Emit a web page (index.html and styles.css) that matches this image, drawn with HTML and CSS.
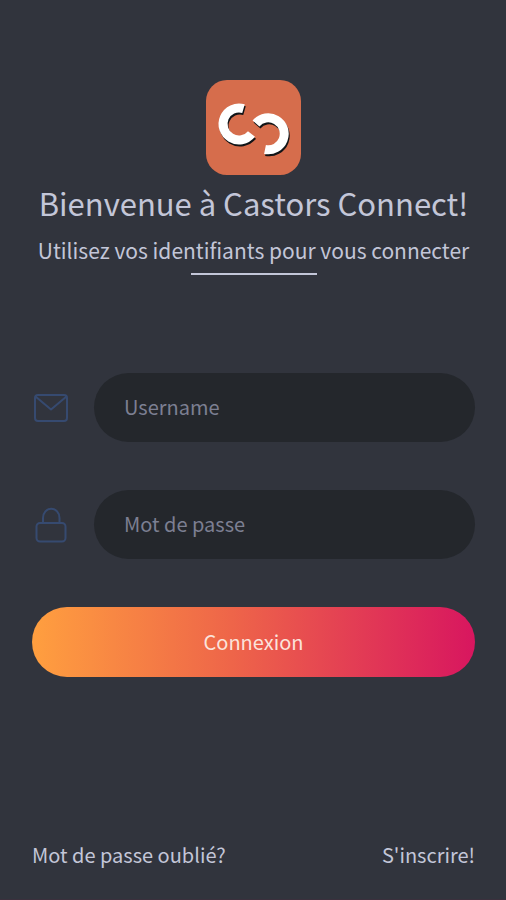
FILE: index.html
```html
<!DOCTYPE html>
<html lang="fr">
<head>
    <meta charset="UTF-8">
    <meta name="viewport" content="width=device-width, initial-scale=1.0">
    <title>Castors Connect</title>
    <link rel="stylesheet" href="styles.css">
</head>
<body>

<main class="container">
    <header class="header">
        <svg class="logo" viewBox="0 0 95 95" role="img" aria-label="Castors Connect">
            <rect width="95" height="95" rx="21" fill="#d66d4c"/>
            <g fill="none" stroke="#111417" stroke-width="9" transform="translate(1 2)">
                <path d="M37.500 28.600A16 16 0 1 0 45.500 54"/>
                <path d="M50 43.500A16 16 0 1 1 59 69.500"/>
            </g>
            <g fill="none" stroke="#fff" stroke-width="9">
                <path d="M37.500 28.600A16 16 0 1 0 45.500 54"/>
                <path d="M50 43.500A16 16 0 1 1 59 69.500"/>
            </g>
        </svg>
        <h1>Bienvenue à Castors Connect!</h1>
        <p class="subtitle">Utilisez vos identifiants pour vous connecter</p>
        <hr class="line">
    </header>

    <form class="login">
        <div class="field">
            <label for="username" aria-label="Username">
                <svg class="icon" viewBox="0 0 36 36">
                    <rect x="3" y="5" width="32" height="26" rx="3"/>
                    <path d="M3.500 6.500l15.500 13L34.500 6.500"/>
                </svg>
            </label>
            <input type="text" id="username" placeholder="Username">
        </div>
        <div class="field">
            <label for="password" aria-label="Mot de passe">
                <svg class="icon" viewBox="0 0 36 36">
                    <rect x="4.500" y="16" width="29" height="18.500" rx="3.500"/>
                    <path d="M11 16v-5a8 9 0 0 1 16.500 0v5"/>
                </svg>
            </label>
            <input type="password" id="password" placeholder="Mot de passe">
        </div>
        <button type="submit">Connexion</button>
    </form>

    <footer class="links">
        <a href="#">Mot de passe oublié?</a>
        <a href="#">S'inscrire!</a>
    </footer>
</main>

</body>
</html>
```

FILE: styles.css
```css
* {
    box-sizing: border-box;
}

body {
    margin: 0;
    background-color: #31343d;
    color: #c3c6d8;
    font-family: "Noto Sans CJK SC", "Noto Sans", sans-serif;
    font-size: 20px;
    line-height: 32px;
}

.container {
    display: flex;
    flex-direction: column;
    min-height: 100vh;
    padding: 80px 31px 28px 32px;
    border-bottom: 1px solid #3b303d;
}

.header {
    display: flex;
    flex-direction: column;
    align-items: center;
    text-align: center;
    white-space: nowrap;
}

.logo {
    width: 95px;
    height: 95px;
}

h1 {
    margin: 4px 0 0;
    font-size: 31px;
    font-weight: 400;
    line-height: 48px;
}

.subtitle {
    margin: 7px 0;
    font-size: 21px;
}

.line {
    width: 126px;
    height: 2px;
    margin: 0;
    border: none;
    background-color: #c3c6d8;
}

.login {
    display: flex;
    flex-direction: column;
    gap: 48px;
    margin-top: 98px;
}

.field {
    display: flex;
    align-items: center;
    gap: 26px;
}

.field label {
    display: flex;
}

.icon {
    width: 36px;
    height: 36px;
    fill: none;
    stroke: #364a70;
    stroke-width: 2;
    stroke-linejoin: round;
}

.field input {
    flex: 1;
    min-width: 0;
    height: 69px;
    padding: 0 30px 2px;
    border: none;
    border-radius: 35px;
    background-color: #24272c;
    color: #c3c6d8;
    font: inherit;
}

.field input::placeholder {
    color: #7c7f92;
    opacity: 1;
}

button {
    height: 70px;
    padding: 0;
    border: none;
    border-radius: 35px;
    background: linear-gradient(to right, #ff9f3f, #ee6549 45%, #d8165f);
    color: #fbe3dc;
    font: inherit;
    cursor: pointer;
}

.links {
    display: flex;
    justify-content: space-between;
    margin-top: auto;
}

.links a {
    color: #c3c6d8;
    text-decoration: none;
}
```
